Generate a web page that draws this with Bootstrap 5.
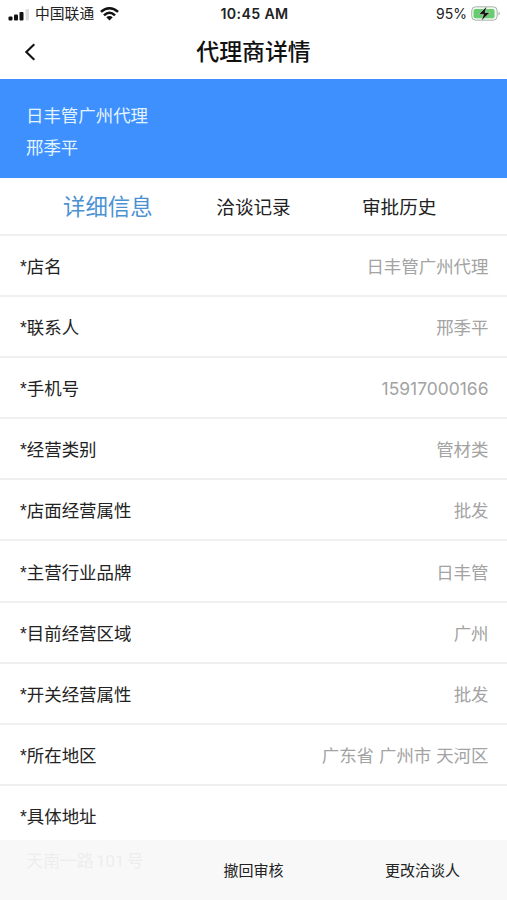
<!DOCTYPE html>
<html lang="zh-CN">
<head>
<meta charset="utf-8">
<meta name="viewport" content="width=device-width, initial-scale=1">
<title>代理商详情</title>
<link href="https://cdn.jsdelivr.net/npm/bootstrap@5.3.0/dist/css/bootstrap.min.css" rel="stylesheet">
<style>
  body { font-family: Inter, "Noto Sans CJK SC", sans-serif; color: #222; background: #fff; font-size: 17.45px; line-height: 26px; }
  .screen { height: 900px; }
  .status-bar { height: 27px; padding: 0 6px 0 8px; font-size: 14px; line-height: 26px; }
  .carrier { font-size: 14.8px; margin: 1px 6px 0 5px; line-height: 27px; }
  .clock { font-size: 14.2px; font-weight: 600; letter-spacing: .35px; }
  .title-bar { height: 52px; }
  .title-bar h1 { font-size: 22.9px; font-weight: 500; color: #111; line-height: 51px; }
  .back { width: 60px; height: 50px; padding-left: 24px; }
  .banner { height: 99px; background: #3e90ff; color: #e4f4ff; padding: 21px 26px 0; line-height: 32px; }
  .tabs { height: 58px; padding: 1px 35px 0; border-bottom: 2px solid #f0f0f0; font-size: 18.6px; }
  .tabs .nav-link { color: #222; padding: 0; }
  .tabs .nav-link.active { color: #4b92d3; font-size: 22.4px; }
  .field { height: 61.1px; padding: 3px 18.5px 0 20px; border-bottom: 2px solid #f0f0f0; }
  .field-name { font-family: "Liberation Sans", "Noto Sans CJK SC", sans-serif; }
  .field-value { color: #a3a3a3; }
  .address { padding: 18px 20px 0; }
  .address .field-value { padding: 18px 6px 0; font-family: Roboto, "Noto Sans CJK SC", sans-serif; font-size: 17.2px; word-spacing: -1.5px; letter-spacing: -.3px; }
  .action-bar { height: 60px; background: rgba(247,247,247,.88); font-size: 15px; }
  .action-bar button { color: #222; font-size: 15px; }
</style>
</head>
<body>
<main class="screen position-relative overflow-hidden">
  <header>
    <div class="status-bar row g-0 align-items-center">
      <div class="col d-flex align-items-center">
        <svg width="22" height="13" viewBox="0 0 22 13" aria-hidden="true">
          <g fill="#111"><rect x=".5" y="8.5" width="4" height="4" rx="1"/><rect x="6" y="6.5" width="4" height="6" rx="1"/><rect x="11.5" y="4" width="4" height="8.5" rx="1"/></g>
          <rect x="17.5" y="1" width="3.5" height="11.5" rx="1" fill="#ddd"/>
        </svg>
        <span class="carrier">中国联通</span>
        <svg width="19" height="14" viewBox="0 0 18 14" preserveAspectRatio="none" aria-hidden="true">
          <g fill="none" stroke="#111" stroke-width="2.5"><path d="M.9 4.9Q9-2.3 17.1 4.9"/><path d="M3.8 8.3Q9 3.3 14.2 8.3"/></g>
          <path d="M5.9 10.3Q9 7.5 12.1 10.3L9 13.4Z" fill="#111"/>
        </svg>
      </div>
      <div class="clock col-auto">10:45 AM</div>
      <div class="col d-flex align-items-center justify-content-end">
        <span>95%</span>
        <svg class="ms-1" width="30" height="16" viewBox="0 0 30 16" aria-hidden="true">
          <rect x=".7" y=".8" width="25.5" height="13.4" rx="4" fill="#f0f8f0" stroke="#aab5aa"/>
          <rect x="2.5" y="3" width="21" height="9.2" rx="2" fill="#66cc70"/>
          <path d="M27.5 5.5q2.6 2 0 4Z" fill="#aaa"/>
          <path d="M15.8.3L7.7 8.4h4.9L10.2 14.9 19 6.4h-5Z" fill="#111" stroke="#e8f8e8" stroke-width=".5"/>
        </svg>
      </div>
    </div>
    <div class="title-bar d-flex align-items-start">
      <a class="back d-flex align-items-center" href="#" aria-label="返回">
        <svg width="13" height="18" viewBox="0 0 13 18" fill="none" stroke="#111" stroke-width="2.1"><path d="M10.3 1.2L2.3 9l8 7.8"/></svg>
      </a>
      <h1 class="flex-grow-1 text-center m-0">代理商详情</h1>
      <div class="back"></div>
    </div>
  </header>
  <section class="banner">
    <div>日丰管广州代理</div>
    <div>邢季平</div>
  </section>
  <nav class="tabs row g-0 align-items-center text-center">
    <a class="nav-link active col-4" href="#">详细信息</a>
    <a class="nav-link col-4" href="#">洽谈记录</a>
    <a class="nav-link col-4" href="#">审批历史</a>
  </nav>
  <section>
    <div class="field d-flex align-items-center justify-content-between"><span class="field-name">*店名</span><span class="field-value">日丰管广州代理</span></div>
    <div class="field d-flex align-items-center justify-content-between"><span class="field-name">*联系人</span><span class="field-value">邢季平</span></div>
    <div class="field d-flex align-items-center justify-content-between"><span class="field-name">*手机号</span><span class="field-value">15917000166</span></div>
    <div class="field d-flex align-items-center justify-content-between"><span class="field-name">*经营类别</span><span class="field-value">管材类</span></div>
    <div class="field d-flex align-items-center justify-content-between"><span class="field-name">*店面经营属性</span><span class="field-value">批发</span></div>
    <div class="field d-flex align-items-center justify-content-between"><span class="field-name">*主营行业品牌</span><span class="field-value">日丰管</span></div>
    <div class="field d-flex align-items-center justify-content-between"><span class="field-name">*目前经营区域</span><span class="field-value">广州</span></div>
    <div class="field d-flex align-items-center justify-content-between"><span class="field-name">*开关经营属性</span><span class="field-value">批发</span></div>
    <div class="field d-flex align-items-center justify-content-between"><span class="field-name">*所在地区</span><span class="field-value">广东省 广州市 天河区</span></div>
    <div class="address"><div class="field-name">*具体地址</div><div class="field-value">天南一路 101 号</div></div>
  </section>
  <footer class="action-bar position-absolute bottom-0 start-0 end-0 row g-0 align-items-center text-center">
    <div class="col-4 offset-4"><button class="btn border-0 p-0" type="button">撤回审核</button></div>
    <div class="col-4"><button class="btn border-0 p-0" type="button">更改洽谈人</button></div>
  </footer>
</main>
<script src="https://cdn.jsdelivr.net/npm/bootstrap@5.3.0/dist/js/bootstrap.bundle.min.js"></script>
</body>
</html>
